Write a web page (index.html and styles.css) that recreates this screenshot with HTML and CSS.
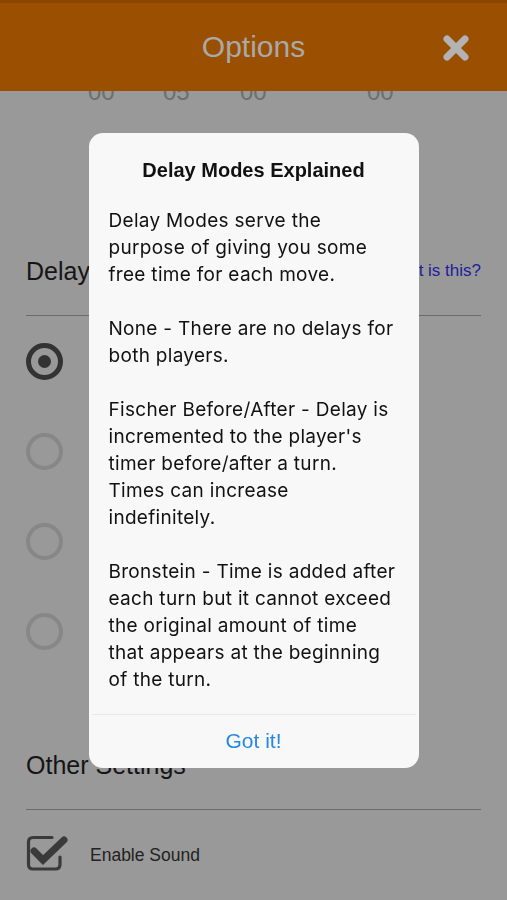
FILE: index.html
```html
<!DOCTYPE html>
<html lang="en">
<head>
<meta charset="utf-8">
<title>Options</title>
<link rel="stylesheet" href="styles.css">
</head>
<body>
<div class="screen">
  <header class="topbar">
    <h1 class="topbar-title">Options</h1>
    <svg class="close-icon" viewBox="0 0 28 26" width="28" height="26" aria-label="Close">
      <path d="M5 4 L23 22 M23 4 L5 22" stroke="#b3b3b3" stroke-width="7" stroke-linecap="round" fill="none"/>
    </svg>
  </header>

  <main class="content">
    <div class="time-row">
      <span class="digits d1">00</span>
      <span class="digits d2">05</span>
      <span class="digits d3">00</span>
      <span class="digits d4">00</span>
    </div>

    <div class="section-head delay-head">
      <span class="section-title">Delay Mode</span>
      <span class="help-link">What is this?</span>
    </div>
    <div class="rule"></div>

    <div class="radio-list">
      <div class="radio-row"><span class="radio selected"></span></div>
      <div class="radio-row"><span class="radio"></span></div>
      <div class="radio-row"><span class="radio"></span></div>
      <div class="radio-row"><span class="radio"></span></div>
    </div>

    <div class="section-head other-head">
      <span class="section-title">Other Settings</span>
    </div>
    <div class="rule"></div>

    <div class="check-row">
      <svg class="checkbox" viewBox="0 0 42 36" width="42" height="36">
        <path d="M26 2.5 H7 Q2.5 2.5 2.5 7 V29.5 Q2.5 34 7 34 H29.5 Q34 34 34 29.5 V22" stroke="#3a3a3a" stroke-width="3.2" fill="none" stroke-linecap="round"/>
        <path d="M8 16 L17 25 L38 5" stroke="#3a3a3a" stroke-width="7" fill="none" stroke-linecap="round" stroke-linejoin="miter"/>
      </svg>
      <span class="check-label">Enable Sound</span>
    </div>
  </main>
</div>

<div class="overlay">
  <div class="dialog" role="dialog">
    <h2 class="dialog-title">Delay Modes Explained</h2>
    <div class="dialog-body">
      <p>Delay Modes serve the<br>purpose of giving you some<br>free time for each move.</p>
      <p>None - There are no delays for<br>both players.</p>
      <p>Fischer Before/After - Delay is<br>incremented to the player's<br>timer before/after a turn.<br>Times can increase<br>indefinitely.</p>
      <p>Bronstein - Time is added after<br>each turn but it cannot exceed<br>the original amount of time<br>that appears at the beginning<br>of the turn.</p>
    </div>
    <div class="dialog-actions">
      <button class="dialog-btn">Got it!</button>
    </div>
  </div>
</div>
</body>
</html>
```

FILE: styles.css
```css
* { box-sizing: border-box; }

html, body {
  margin: 0;
  padding: 0;
  background: #999999;
  font-family: "Liberation Sans", Arial, sans-serif;
}

.screen {
  width: 507px;
  height: 900px;
  display: flex;
  flex-direction: column;
  overflow: hidden;
}

.topbar {
  height: 91px;
  flex: none;
  background: #9b4f00;
  border-top: 3px solid #8a4500;
  display: flex;
  align-items: center;
  justify-content: center;
  position: relative;
}

.topbar-title {
  margin: 0;
  font-weight: 400;
  font-size: 30px;
  color: #a9a9a9;
  line-height: 1;
  margin-top: -1px;
}

.close-icon {
  position: absolute;
  right: 37px;
  top: 32px;
}

.content {
  flex: 1;
  overflow: hidden;
  padding: 0 26px;
}

.time-row {
  display: flex;
  font-size: 24px;
  line-height: 24px;
  height: 24px;
  color: #6e6e6e;
  margin-top: -11px;
}

.digits { width: 27px; }
.d1 { margin-left: 62px; }
.d2 { margin-left: 48px; }
.d3 { margin-left: 50px; }
.d4 { margin-left: 100px; }

.section-head {
  display: flex;
  justify-content: space-between;
  align-items: center;
  height: 40px;
}

.delay-head { margin-top: 147px; }
.other-head { margin-top: 69px; }

.section-title {
  font-size: 25px;
  color: #151515;
}

.help-link {
  font-size: 17px;
  color: #1e1e9c;
}

.rule {
  height: 1px;
  background: #6b6b6b;
  margin-top: 24px;
}

.radio-list {
  display: flex;
  flex-direction: column;
}

.radio-row {
  height: 90px;
  display: flex;
  align-items: center;
}

.radio {
  width: 37px;
  height: 37px;
  border-radius: 50%;
  border: 4px solid #878787;
  flex: none;
  display: flex;
  align-items: center;
  justify-content: center;
}

.radio.selected {
  border: 5px solid #333333;
}

.radio.selected::after {
  content: "";
  width: 13px;
  height: 13px;
  border-radius: 50%;
  background: #333333;
}

.check-row {
  display: flex;
  align-items: center;
  margin-top: 25px;
  gap: 22px;
}

.checkbox { flex: none; }

.check-label {
  font-size: 17.5px;
  color: #222222;
  padding-top: 4px;
}

.overlay {
  position: fixed;
  inset: 0;
  display: flex;
  align-items: center;
  justify-content: center;
}

.dialog {
  width: 330px;
  height: 635px;
  background: #f8f8f8;
  border-radius: 14px;
  display: flex;
  flex-direction: column;
  overflow: hidden;
}

.dialog-title {
  margin: 0;
  padding-top: 25px;
  font-family: "Liberation Sans", Arial, sans-serif;
  font-weight: 700;
  font-size: 20px;
  line-height: 24px;
  text-align: center;
  color: #111111;
}

.dialog-body {
  padding: 25px 20px 0 20px;
  font-family: Inter, "Liberation Sans", sans-serif;
  font-size: 19px;
  letter-spacing: 0.3px;
  line-height: 27px;
  color: #111111;
  white-space: nowrap;
  flex: 1;
}

.dialog-body p {
  margin: 0 0 27px 0;
}

.dialog-body p:last-child { margin-bottom: 0; }

.dialog-actions {
  height: 54px;
  flex: none;
  border-top: 1px solid #e8e8e8;
  margin: 0 3px;
  display: flex;
  align-items: center;
  justify-content: center;
}

.dialog-btn {
  background: none;
  border: none;
  padding: 0;
  font-family: "Liberation Sans", Arial, sans-serif;
  font-size: 21px;
  color: #2688e4;
  cursor: pointer;
}
```
